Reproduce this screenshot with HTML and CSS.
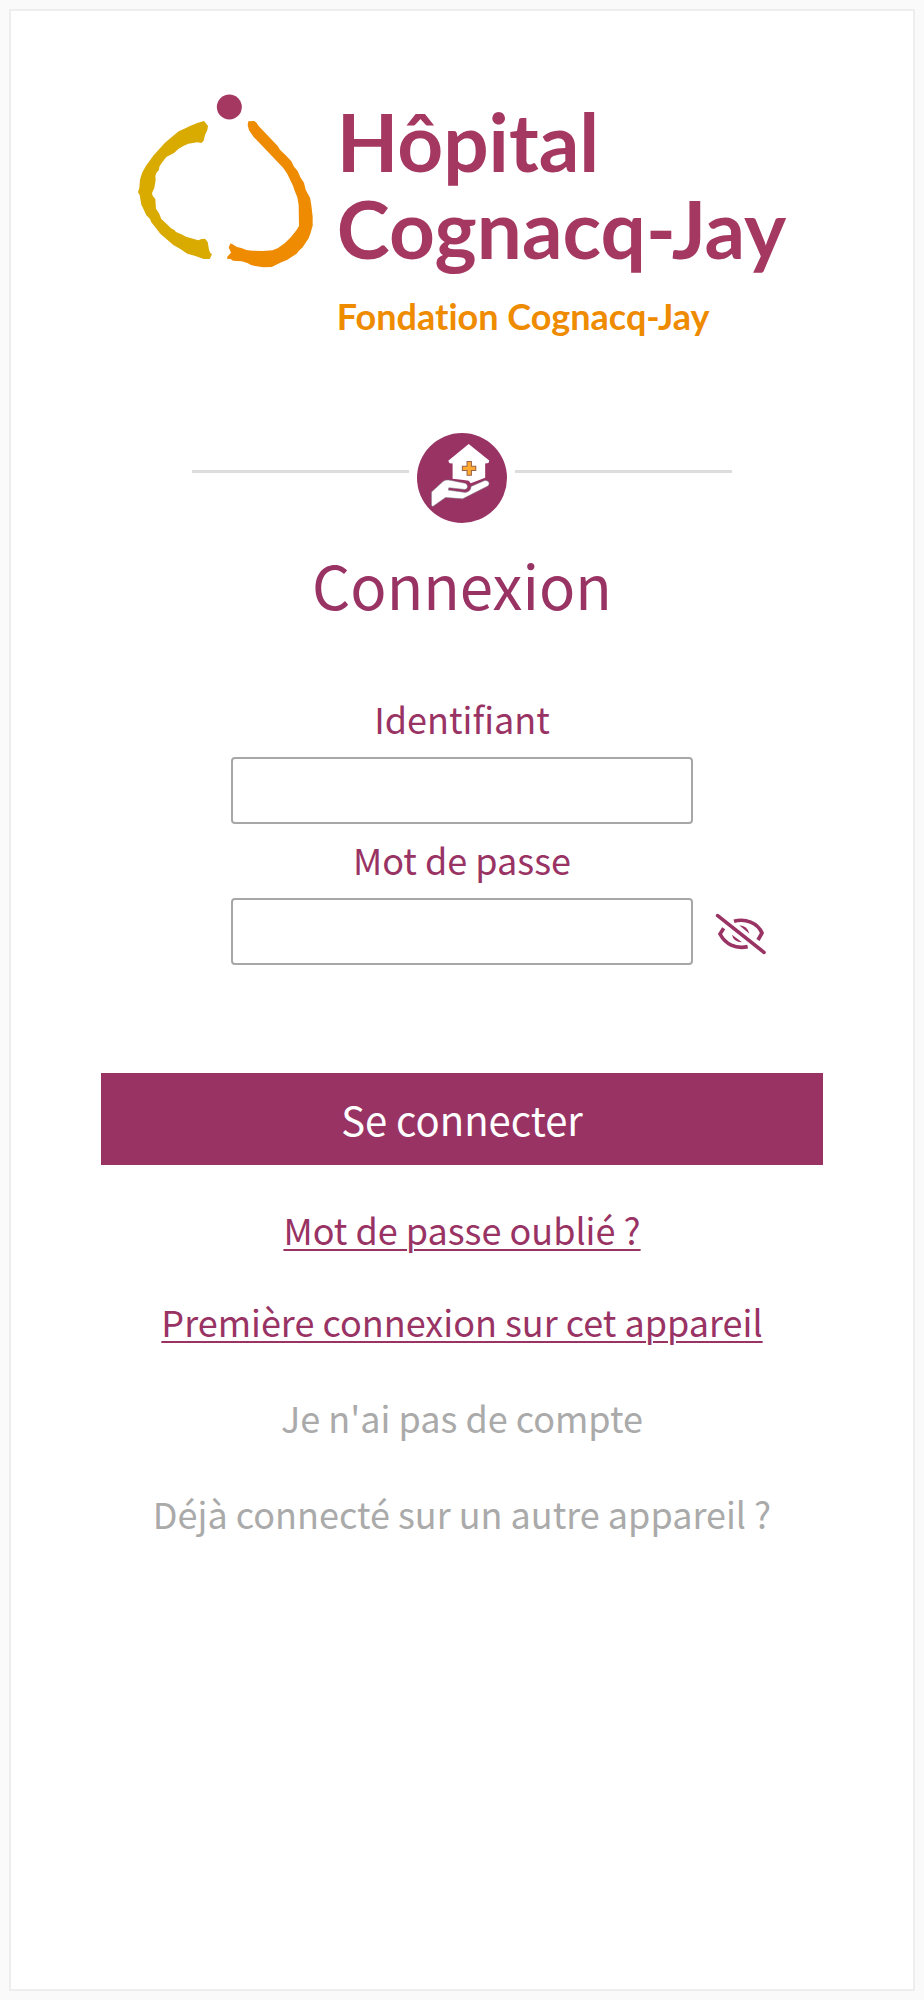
FILE: index.html
```html
<!DOCTYPE html>
<html lang="fr">
<head>
<meta charset="utf-8">
<meta name="viewport" content="width=device-width, initial-scale=1">
<title>Connexion - Hôpital Cognacq-Jay</title>
<link rel="stylesheet" href="styles.css">
</head>
<body>
<main class="card">
  <header class="logo">
    <svg class="logo-mark" viewBox="54 42 525 522" aria-hidden="true">
      <circle cx="328" cy="81" r="37.500" fill="#a53860"/>
      <path fill="#d9aa00" d="M252 123L264 138L262 150L255 165L251 182L244 189L232 187L219 189L205 191L190 198L175 207L162 219L139 231L125 249L118 260L117 269L109 279L106 288L107 300L103 324L96 339L98 347L106 357L108 386L117 400L124 417L140 432L153 445L163 450L168 456L187 464L198 470L214 475L235 481L245 477L255 476L263 486L267 509L271 519L276 523L269 537L251 537L226 528L202 521L181 507L160 495L140 478L121 461L94 427L90 417L79 406L70 386L64 374L59 345L54 337L58 323L60 299L66 279L78 257L101 226L135 188L158 169L176 154L193 146L210 138L232 129Z"/>
      <path fill="#ee8b00" d="M385 124L403 123L410 129L416 138L473 198L480 209L500 229L514 244L522 260L533 273L541 292L552 308L557 329L570 353L574 376L578 410L578 437L571 461L566 475L548 502L536 513L530 521L501 540L484 547L455 561L430 562L405 558L393 555L382 549L365 544L339 542L332 537L321 536L322 530L333 518L326 502L332 490L340 494L351 501L364 504L379 510L397 512L428 513L458 511L474 504L494 490L511 473L528 452L537 438L536 375L532 352L524 332L519 317L502 282L490 264L401 171L387 151L383 135Z"/>
    </svg>
    <div class="logo-text">
      <span class="logo-name">Hôpital</span>
      <span class="logo-name">Cognacq-Jay</span>
      <span class="logo-sub">Fondation Cognacq-Jay</span>
    </div>
  </header>

  <div class="divider">
    <span class="divider-line"></span>
    <svg class="divider-icon" viewBox="52 38 268 268" aria-hidden="true">
      <circle cx="186" cy="172" r="134" fill="#993364"/>
      <path fill="#fff" d="M206 71L267 120L265 127L255 129V171L212 188L206 180L191 178L158 174V129L149 128L145 121Z"/>
      <path fill="#fff" stroke="#77747c" stroke-width="1.500" d="M95 214L130 182C134 179 139 178 145 178C165 181 181 185 196 188C206 194 203 206 194 206L147 201L145 208L196 215C207 213 213 207 213 197L252 180C264 177 272 188 263 196L188 234L137 230L99 257L95 253Z"/>
      <path fill="#ffab31" stroke="#9b6048" stroke-width="3" d="M201 123H214V137H227V150H214V164H201V150H187V137H201Z"/>
    </svg>
    <span class="divider-line"></span>
  </div>

  <h1 class="title">Connexion</h1>

  <form class="form">
    <label class="label" for="login">Identifiant</label>
    <div class="field">
      <input class="input" id="login" type="text" autocomplete="username">
    </div>
    <label class="label" for="password">Mot de passe</label>
    <div class="field">
      <input class="input" id="password" type="password" autocomplete="current-password">
      <button class="eye" type="button" aria-label="Afficher le mot de passe">
        <svg class="eye-icon" viewBox="46 68 156 126" aria-hidden="true" fill="none" stroke="#993364" stroke-linecap="round">
          <path stroke-width="11" d="M54 76L193 186"/>
          <path stroke-width="11" stroke-linecap="butt" d="M103 93C137 83 174 98 187 128L175 149M72 114L61 131C77 161 107 177 144 169"/>
          <path fill="#993364" stroke="none" d="M119 105Q143 106 149 130ZM97 133Q101 155 127 156Z"/>
        </svg>
      </button>
    </div>
    <button class="submit" type="submit">Se connecter</button>
  </form>

  <nav class="links">
    <a class="link" href="#oubli">Mot de passe oublié ?</a>
    <a class="link" href="#premiere">Première connexion sur cet appareil</a>
    <p class="muted">Je n'ai pas de compte</p>
    <p class="muted">Déjà connecté sur un autre appareil ?</p>
  </nav>
</main>
</body>
</html>
```
FILE: styles.css
```css
* {
  box-sizing: border-box;
}

body {
  margin: 0;
  min-height: 100vh;
  padding: 9px;
  display: flex;
  background: #fafafa;
  color: #993364;
  font-family: "Noto Sans CJK SC", "Noto Sans", sans-serif;
  font-size: 36px;
  line-height: 52px;
}

.card {
  flex: 1;
  min-width: 0;
  padding: 83px 90px 40px;
  border: 2px solid #eee;
  background: #fff;
  text-align: center;
}

.logo {
  display: flex;
  justify-content: center;
  align-items: flex-start;
  gap: 24px;
}

.logo-mark {
  flex: none;
  width: 175px;
  height: 174px;
}

.logo-text {
  display: flex;
  flex-direction: column;
  padding-top: 4px;
  color: #a53860;
  font-family: Lato, sans-serif;
  font-weight: 700;
  font-variant-ligatures: none;
  text-align: left;
  white-space: nowrap;
}

.logo-name {
  font-size: 80px;
  line-height: 87px;
}

.logo-sub {
  color: #ee8b00;
  font-size: 36px;
  line-height: 88px;
}

.divider {
  display: flex;
  justify-content: center;
  gap: 8px;
  margin-top: 73px;
}

.divider-line {
  flex: 0 1 217px;
  height: 3px;
  margin-top: 37px;
  background: #ddd;
}

.divider-icon {
  flex: none;
  width: 90px;
  height: 90px;
}

.title {
  margin: 19px 0 0;
  font-size: 60px;
  font-weight: 400;
  line-height: 84px;
}

.form {
  display: flex;
  flex-direction: column;
  margin-top: 66px;
}

.label {
  align-self: center;
}

.field {
  display: grid;
  grid-template-columns: 1fr minmax(0, 462px) 1fr;
  align-items: center;
  margin: 13px 0 9px;
}

.input {
  grid-column: 2;
  width: 100%;
  height: 67px;
  padding: 0 12px;
  border: 2px solid #a7a7a7;
  border-radius: 4px;
  background: #fff;
  color: inherit;
  font: inherit;
}

.eye {
  justify-self: start;
  display: flex;
  margin-left: 22px;
  padding: 4px 0 0;
  border: 0;
  background: none;
}

.eye-icon {
  width: 52px;
  height: 42px;
}

.submit {
  height: 92px;
  margin-top: 99px;
  padding: 0;
  border: 0;
  background: #993364;
  color: #fff;
  font: inherit;
  font-size: 40px;
}

.links {
  display: flex;
  flex-direction: column;
  align-items: center;
  gap: 40px;
  margin-top: 38px;
}

.link {
  color: inherit;
  text-decoration-thickness: 2px;
  text-underline-offset: 4px;
}

.muted {
  margin: 4px 0 0;
  color: #aaa;
}
```
